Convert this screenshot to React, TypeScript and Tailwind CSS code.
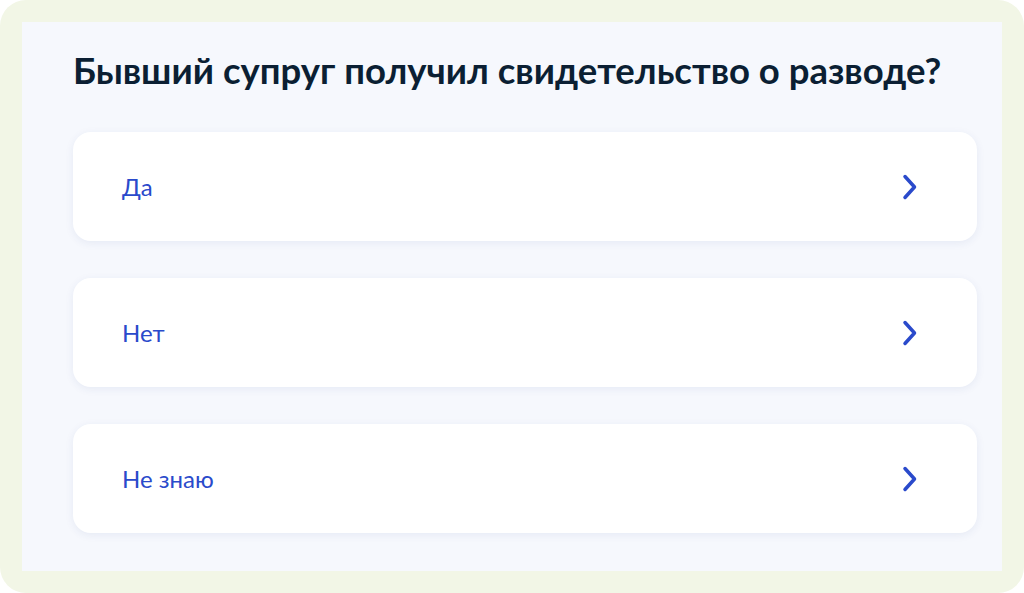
const options = ["Да", "Нет", "Не знаю"];

function Chevron() {
  return (
    <svg width="16" height="26" viewBox="0 0 16 26" fill="none">
      <path
        d="M3 2.5 L12.5 13 L3 23.5"
        stroke="#2a4acb"
        strokeWidth="3.5"
        strokeLinecap="round"
        strokeLinejoin="round"
      />
    </svg>
  );
}

export default function App() {
  return (
    <div className="w-[1024px] h-[593px] bg-white" style={{ fontFamily: "Lato, 'Noto Sans', sans-serif" }}>
      <div className="h-full w-full rounded-[26px] bg-[#f2f6e6] p-[22px]">
        <div className="h-full w-full bg-[#f6f8fd] pl-[51px] pr-[25px] pt-[26px]">
          <h1 className="text-[36.5px] leading-[44px] font-bold text-[#0b1f33]">
            Бывший супруг получил свидетельство о разводе?
          </h1>
          <div className="mt-[40px] flex flex-col gap-[37px]">
            {options.map((o) => (
              <div
                key={o}
                className="h-[109px] rounded-[18px] bg-white shadow-[0_2px_8px_rgba(40,60,140,0.08)] flex items-center justify-between pl-[49px] pr-[59px]"
              >
                <span className="text-[24px] text-[#2a4acb]">{o}</span>
                <Chevron />
              </div>
            ))}
          </div>
        </div>
      </div>
    </div>
  );
}
